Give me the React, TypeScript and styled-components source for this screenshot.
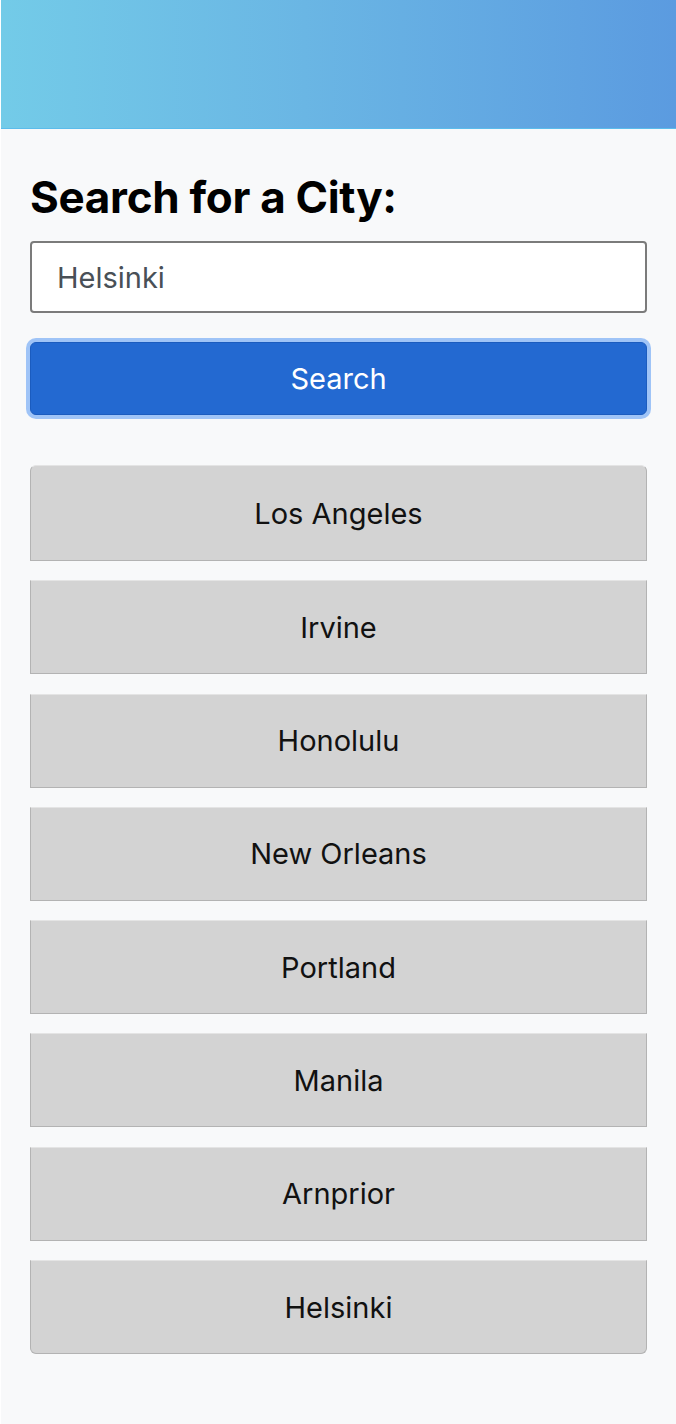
import React from "react";
import styled, { createGlobalStyle } from "styled-components";

const Global = createGlobalStyle`
  html, body { margin: 0; padding: 0; }
  body {
    background: #f8f9fa;
    font-family: Inter, "Noto Sans", sans-serif;
    -webkit-font-smoothing: antialiased;
  }
`;

const Page = styled.div`
  min-height: 1424px;
  background: #f8f9fa;
  border-left: 1px solid #ffffff;
  box-sizing: border-box;
`;

const Header = styled.header`
  height: 128px;
  background: linear-gradient(90deg, #73cbe8 0%, #6ab6e4 45%, #5b9be0 100%);
  border-bottom: 1px solid #5bbcec;
`;

const Main = styled.main`
  padding: 44px 29px 60px 29px;
  display: flex;
  flex-direction: column;
`;

const Title = styled.h1`
  margin: 0 0 20px 0;
  font-size: 44px;
  line-height: 48px;
  font-weight: 700;
  color: #000;
  letter-spacing: -0.3px;
`;

const Input = styled.input`
  box-sizing: border-box;
  width: 100%;
  height: 72px;
  border: 2px solid #7b7b7b;
  border-radius: 4px;
  background: #fff;
  padding: 0 25px;
  font-family: inherit;
  font-size: 29px;
  color: #495057;
  outline: none;
`;

const SearchButton = styled.button`
  box-sizing: border-box;
  margin-top: 29px;
  width: 100%;
  height: 73px;
  border: 1px solid #1b5cbf;
  border-radius: 6px;
  background: #2369d1;
  color: #fff;
  font-family: inherit;
  font-size: 29px;
  box-shadow: 0 0 0 4px #9fc4f7;
`;

const List = styled.div`
  margin-top: 50px;
  display: flex;
  flex-direction: column;
  gap: 19.3px;
`;

const CityButton = styled.button<{ $first?: boolean; $last?: boolean }>`
  box-sizing: border-box;
  width: 100%;
  height: ${(p) => (p.$first ? "96px" : "94px")};
  background: #d3d3d3;
  border: 1px solid #b3b3b3;
  border-top-color: #e4e4e4;
  border-radius: ${(p) =>
    p.$first ? "6px 6px 0 0" : p.$last ? "0 0 6px 6px" : "0"};
  font-family: inherit;
  font-size: 29px;
  color: #111;
  padding: 0;
`;

const cities = [
  "Los Angeles",
  "Irvine",
  "Honolulu",
  "New Orleans",
  "Portland",
  "Manila",
  "Arnprior",
  "Helsinki",
];

export default function App() {
  return (
    <Page>
      <Global />
      <Header />
      <Main>
        <Title>Search for a City:</Title>
        <Input defaultValue="Helsinki" />
        <SearchButton>Search</SearchButton>
        <List>
          {cities.map((c, i) => (
            <CityButton key={c} $first={i === 0} $last={i === cities.length - 1}>
              {c}
            </CityButton>
          ))}
        </List>
      </Main>
    </Page>
  );
}
